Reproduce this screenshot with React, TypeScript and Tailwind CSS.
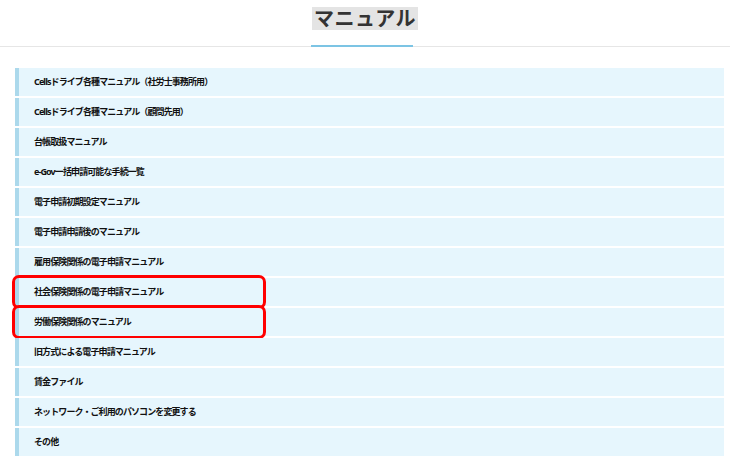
const items = [
  "Cellsドライブ各種マニュアル（社労士事務所用）",
  "Cellsドライブ各種マニュアル（顧問先用）",
  "台帳取扱マニュアル",
  "e-Gov一括申請可能な手続一覧",
  "電子申請初期設定マニュアル",
  "電子申請申請後のマニュアル",
  "雇用保険関係の電子申請マニュアル",
  "社会保険関係の電子申請マニュアル",
  "労働保険関係のマニュアル",
  "旧方式による電子申請マニュアル",
  "賃金ファイル",
  "ネットワーク・ご利用のパソコンを変更する",
  "その他",
];

const marked = [7, 8];

export default function App() {
  return (
    <div
      className="w-[730px] h-[463px] overflow-hidden bg-white"
      style={{ fontFamily: '"Noto Sans", "Noto Sans CJK JP", sans-serif' }}
    >
      {/* 見出し */}
      <div className="relative h-[47px] border-b border-[#e6e6e6]">
        <div className="flex justify-center pt-[7px]">
          <h1 className="bg-[#e4e4e4] px-[2px] text-[20px] leading-[23px] font-bold tracking-[0.5px] text-[#333]">
            マニュアル
          </h1>
        </div>
        <div className="absolute left-[311px] bottom-[-1px] h-[2px] w-[102px] bg-[#7cc4e4]" />
      </div>

      {/* 一覧 */}
      <ul className="mt-[21px] ml-[15px] mr-[6px] flex flex-col gap-[2px]">
        {items.map((t, i) => (
          <li
            key={t}
            className="relative flex h-[28px] items-center border-l-[4px] border-[#acd9ec] bg-[#e6f6fd] pl-[15px] text-[9px] font-bold tracking-[-0.9px] text-[#111]"
          >
            {t}
            {marked.includes(i) && (
              <span className="absolute left-[-7px] top-[-3px] bottom-[-3px] w-[254px] rounded-[7px] border-[3px] border-[#ff0000]" />
            )}
          </li>
        ))}
      </ul>
    </div>
  );
}
